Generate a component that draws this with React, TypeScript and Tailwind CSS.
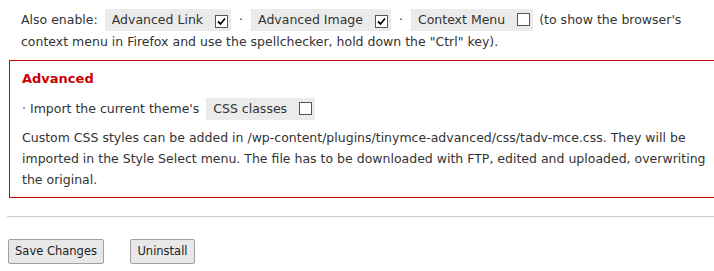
import React from "react";

function Check({ checked }: { checked?: boolean }) {
  return (
    <span className="inline-flex h-[13px] w-[13px] items-center justify-center border border-[#555] bg-white align-[-2px] ml-[12px]">
      {checked && (
        <svg width="9" height="9" viewBox="0 0 9 9">
          <path d="M1 4.5 L3.5 7 L8 1.5" stroke="#000" strokeWidth="1.8" fill="none" />
        </svg>
      )}
    </span>
  );
}

function Opt({ label, checked }: { label: string; checked?: boolean }) {
  return (
    <span className="inline-block bg-[#ebebeb] pl-[7px] pr-[3px] leading-[22px]">
      {label}
      <Check checked={checked} />
    </span>
  );
}

function Dot() {
  return <span className="inline-block w-[20px] text-center">·</span>;
}

export default function App() {
  return (
    <div
      className="w-[714px] h-[271px] overflow-hidden bg-white text-[#333] text-[12.5px]"
      style={{ fontFamily: '"DejaVu Sans", Verdana, sans-serif' }}
    >
      <div className="pl-[21px] pt-[9px] leading-[22px] w-[714px]">
        <span className="mr-[7px]">Also enable:</span>
        <Opt label="Advanced Link" checked />
        <Dot />
        <Opt label="Advanced Image" checked />
        <Dot />
        <Opt label="Context Menu" />
        <span className="ml-[6px]">(to show the browser's</span>
        <br />
        context menu in Firefox and use the spellchecker, hold down the "Ctrl" key).
      </div>
      <div className="ml-[9px] mt-[7px] w-[720px] border border-[#cc0000] pl-[12px] pr-[20px] pt-[8px] pb-[7px]">
        <div className="font-bold text-[#cc0000] text-[13px] leading-[20px]">Advanced</div>
        <div className="mt-[9px] leading-[22px]">
          <span className="mr-[7px]">· Import the current theme's</span>
          <Opt label="CSS classes" />
        </div>
        <p className="mt-[7px] leading-[21px] whitespace-nowrap">
          Custom CSS styles can be added in /wp-content/plugins/tinymce-advanced/css/tadv-mce.css. They will be
          <br />
          imported in the Style Select menu. The file has to be downloaded with FTP, edited and uploaded, overwriting
          <br />
          the original.
        </p>
      </div>
      <div className="ml-[7px] mt-[18px] border-t border-[#ccc]" />
      <div className="flex gap-[26px] pl-[8px] pt-[22px]">
        <button className="h-[25px] w-[96px] border border-[#a0a0a0] rounded-[2px] bg-[#e8e8e8] text-[#222] text-[11.5px]">
          Save Changes
        </button>
        <button className="h-[25px] w-[65px] border border-[#a0a0a0] rounded-[2px] bg-[#e8e8e8] text-[#222] text-[11.5px]">
          Uninstall
        </button>
      </div>
    </div>
  );
}
